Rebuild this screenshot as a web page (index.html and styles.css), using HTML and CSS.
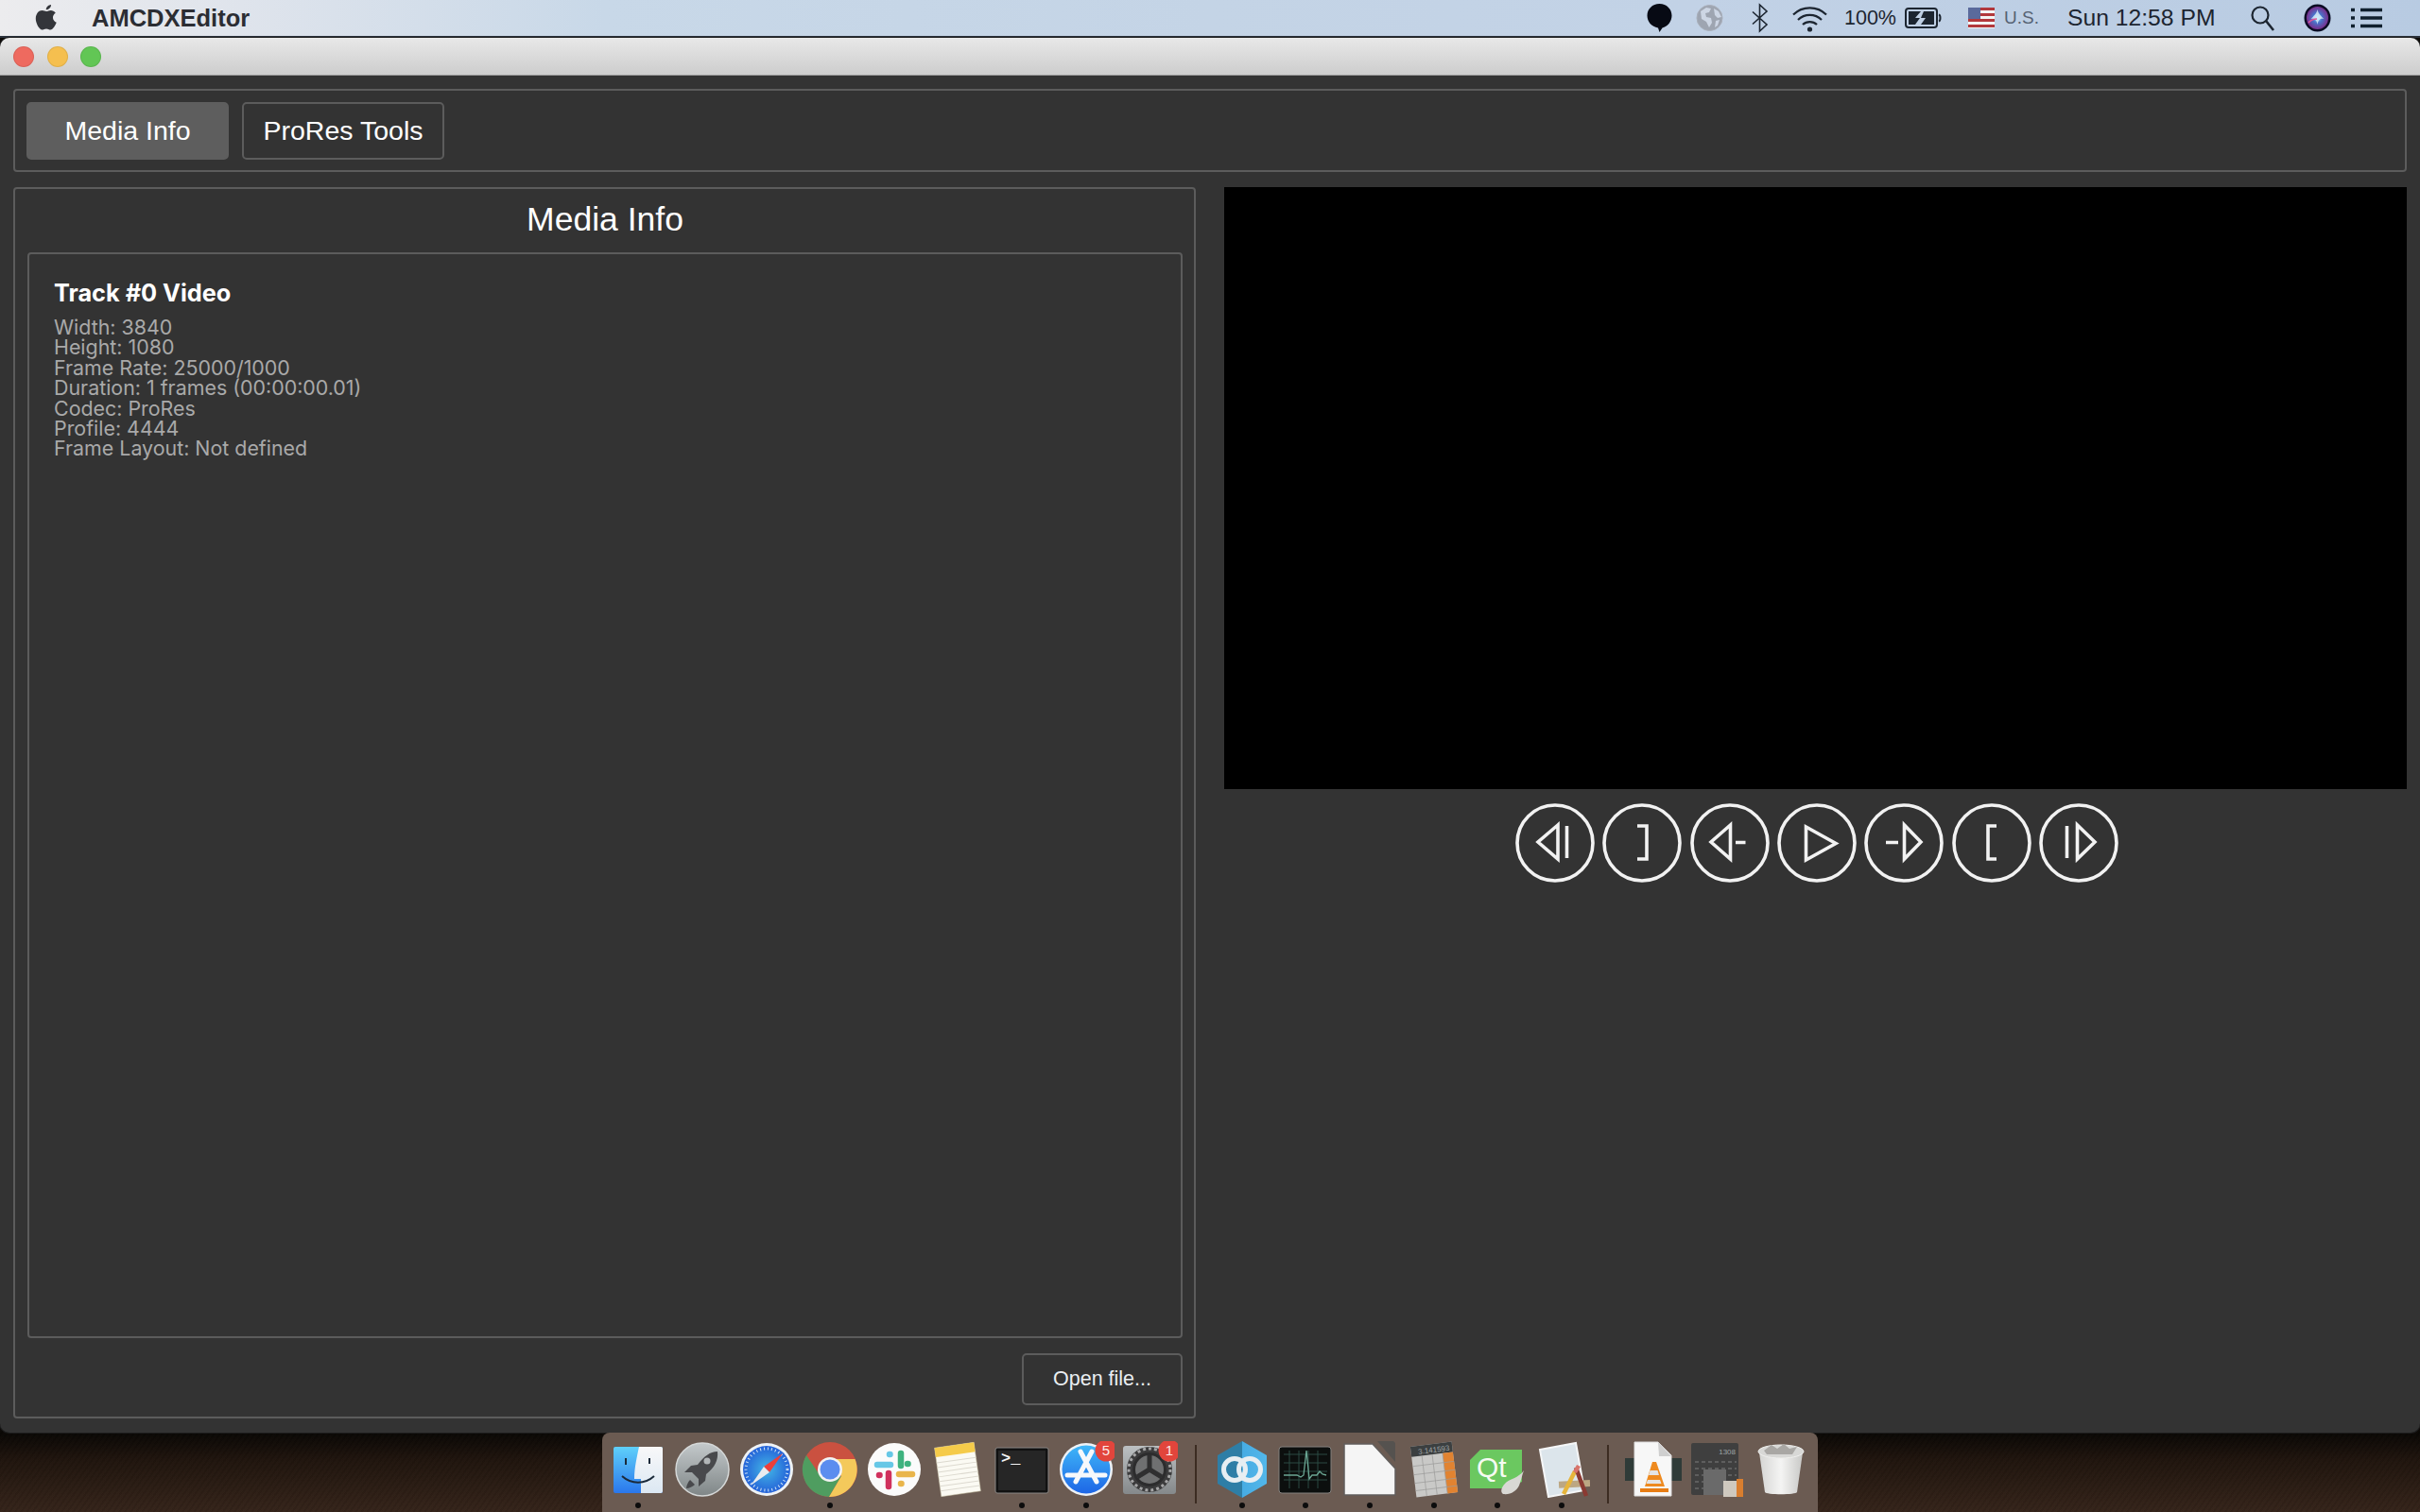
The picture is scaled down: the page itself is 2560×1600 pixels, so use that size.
FILE: index.html
```html
<!DOCTYPE html>
<html lang="en">
<head>
<meta charset="utf-8">
<title>AMCDXEditor</title>
<link rel="stylesheet" href="styles.css">
</head>
<body>
<div class="screen">
  <header class="menubar">
    <div class="menu-left">
      <svg class="apple" viewBox="0 0 24 30"><path d="M17 1c.2 2.600-2.400 5.500-5.200 5.300C11.500 3.700 14.300 1.200 17 1zM12 8c1.400 0 2.700-1.100 4.800-1.100 1.700 0 3.800.9 5 2.800-4.200 2.500-3.500 8.300.9 10-1.100 3-3.700 7.800-6.300 7.800-1.700 0-2.500-1.100-4.400-1.100-2 0-2.900 1.100-4.500 1.100C4.500 27.500.8 20.600.8 15.800.8 10.400 4.100 7 7.600 7c1.900 0 3.200 1 4.400 1z"/></svg>
      <span class="app-name">AMCDXEditor</span>
    </div>
    <div class="menu-right">
      <svg class="slot" viewBox="0 0 53 32"><path d="M26.500 1c7.500 0 13 5.500 13 12.500 0 6.500-4.500 11.500-10 13L26.500 31l-1.500-4.500C18 25 13.500 20 13.500 13.500 13.500 6.500 19 1 26.500 1z" fill="#070a14"/></svg>
      <svg class="slot" viewBox="0 0 53 32"><circle cx="26.500" cy="16" r="13.500" fill="#9ea5b1" stroke="#a9afba"/><path d="M17 9l6-4 5 1-2 4-4 1 1 4 5 1 1 5-3 5-3-6-5-3zM31 6l5 3 3 6-4 1-3-3zM33 19l4-1-2 6-3 2z" fill="#cdd6e4"/></svg>
      <svg class="slot" viewBox="0 0 53 32"><path d="M19 9.500L34 23l-7.500 7V2L34 9 19 22.500" fill="none" stroke="#1c2530" stroke-width="1.600"/></svg>
      <svg class="slot" viewBox="0 0 53 32"><path d="M9 12.500a25 25 0 0 1 35 0M14 18a18 18 0 0 1 25 0M19 23a11 11 0 0 1 15 0" fill="none" stroke="#1c2530" stroke-width="2.200"/><circle cx="26.500" cy="28" r="2.600" fill="#1c2530"/></svg>
      <span class="percent">100%</span>
      <svg class="battery" viewBox="0 0 39 24"><rect x="1" y="2" width="33" height="20" rx="3" fill="none" stroke="#1c2530" stroke-width="2"/><path d="M36 8.500c2 .5 2 6.500 0 7" fill="none" stroke="#1c2530" stroke-width="2"/><path d="M4 5h13l-6 7h5l-5 7H4zM31 5H20l-3 7h5l-5 7h14z" fill="#1c2530"/></svg>
      <svg class="flag" viewBox="0 0 28 22"><rect width="28" height="22" fill="#f4f4f4"/><path d="M0 1.500h28M0 7.500h28M0 13.500h28M0 19.500h28" stroke="#b2383c" stroke-width="3"/><rect width="13" height="12" fill="#5a6a9c"/></svg>
      <span class="locale">U.S.</span>
      <span class="clock">Sun 12:58 PM</span>
      <svg class="search" viewBox="0 0 26 28"><circle cx="11" cy="11" r="8.500" fill="none" stroke="#1c2530" stroke-width="2.200"/><path d="M17 17l8 10" stroke="#1c2530" stroke-width="2.600"/></svg>
      <svg class="siri" viewBox="0 0 29 30">
        <defs><radialGradient id="siriG"><stop offset="0" stop-color="#8fdcf2"/><stop offset=".45" stop-color="#4a70c8"/><stop offset="1" stop-color="#7a2f8e"/></radialGradient></defs>
        <ellipse cx="14.500" cy="15" rx="14" ry="14.500" fill="#0a0c24"/><ellipse cx="14.500" cy="15" rx="11.500" ry="12" fill="url(#siriG)"/><path d="M14.500 6c1 5 4 7 7 10-3-1-6 0-7 6-1-6-4-7-7-6 3-3 6-5 7-10z" fill="#dff0fa" opacity=".8"/><path d="M5 20c3-3 6-4 9-4" stroke="#e0569a" stroke-width="1.500" fill="none"/>
      </svg>
      <svg class="list" viewBox="0 0 33 24"><path d="M10 3.500h23M10 12h23M10 20.500h23" stroke="#10202e" stroke-width="3.600"/><path d="M0 3.500h4M0 12h4M0 20.500h4" stroke="#10202e" stroke-width="3.600"/></svg>
    </div>
  </header>

  <main class="window">
    <div class="titlebar">
      <span class="light light-close"></span>
      <span class="light light-min"></span>
      <span class="light light-max"></span>
    </div>
    <div class="content">
      <nav class="toolbar">
        <button class="tab tab-active">Media Info</button>
        <button class="tab">ProRes Tools</button>
      </nav>
      <div class="columns">
        <section class="info-panel">
          <h1 class="panel-title">Media Info</h1>
          <div class="tracks">
            <h2 class="track-title">Track #0 Video</h2>
            <p class="track-line">Width: 3840</p>
            <p class="track-line">Height: 1080</p>
            <p class="track-line">Frame Rate: 25000/1000</p>
            <p class="track-line">Duration: 1 frames (00:00:00.01)</p>
            <p class="track-line">Codec: ProRes</p>
            <p class="track-line">Profile: 4444</p>
            <p class="track-line">Frame Layout: Not defined</p>
          </div>
          <div class="panel-actions"><button class="open-btn">Open file...</button></div>
        </section>
        <section class="player">
          <div class="video"></div>
          <div class="controls">
            <svg class="ctrl" viewBox="0 0 84 84"><ellipse cx="42" cy="42" rx="40" ry="40"/><path d="M45 23L24 41l21 18zM54.500 24v34"/></svg>
            <svg class="ctrl" viewBox="0 0 84 84"><ellipse cx="42" cy="42" rx="40" ry="40"/><path d="M37 24h10v35H37"/></svg>
            <svg class="ctrl" viewBox="0 0 84 84"><ellipse cx="42" cy="42" rx="40" ry="40"/><path d="M42.500 23L22 41l20.500 18zM48 41.500h10.500"/></svg>
            <svg class="ctrl" viewBox="0 0 84 84"><ellipse cx="42" cy="42" rx="40" ry="40"/><path d="M30.500 25v35L62 42.500z"/></svg>
            <svg class="ctrl" viewBox="0 0 84 84"><ellipse cx="42" cy="42" rx="40" ry="40"/><path d="M42.500 23L60 41 42.500 59zM23 41.500h13"/></svg>
            <svg class="ctrl" viewBox="0 0 84 84"><ellipse cx="42" cy="42" rx="40" ry="40"/><path d="M47 24h-9v35h9"/></svg>
            <svg class="ctrl" viewBox="0 0 84 84"><ellipse cx="42" cy="42" rx="40" ry="40"/><path d="M40.500 23L59 41 40.500 59zM29.500 24v34"/></svg>
          </div>
        </section>
      </div>
    </div>
  </main>

  <footer class="dock">
    <div class="dock-item on">
      <svg viewBox="0 0 60 60"><defs><linearGradient id="fb" x1="0" y1="0" x2="0" y2="1"><stop offset="0" stop-color="#5fd0fa"/><stop offset="1" stop-color="#2a77ec"/></linearGradient><linearGradient id="fw" x1="0" y1="0" x2="0" y2="1"><stop offset="0" stop-color="#f8f8f9"/><stop offset="1" stop-color="#dce8f3"/></linearGradient></defs>
        <rect x="4" y="6" width="52" height="49" rx="2" fill="url(#fb)"/><path d="M31 6h23a2 2 0 0 1 2 2v45a2 2 0 0 1-2 2H33V40h-7c0-12 3-24 5-34z" fill="url(#fw)"/><path d="M17 18v7M42 18v6" stroke="#1b2a3a" stroke-width="2"/><path d="M13 37c10 9 24 9 34 0" fill="none" stroke="#1b2a3a" stroke-width="2"/></svg>
    </div>
    <div class="dock-item off">
      <svg viewBox="0 0 60 60"><defs><linearGradient id="rk" x1="0" y1="0" x2="0" y2="1"><stop offset="0" stop-color="#c4c9cb"/><stop offset="1" stop-color="#7f8687"/></linearGradient></defs>
        <circle cx="30" cy="30" r="28" fill="url(#rk)" stroke="#d5d8d8" stroke-width="1.500"/><path d="M46 11c1 9-3 17-12 24l-1 7-7 6 0-8-7-7-8 0 7-7 7-1C32 16 38 11 46 11z" fill="#48494c"/><path d="M17 41c-2 2-4 6-4 9 3 0 7-2 9-4z" fill="#48494c"/><circle cx="35" cy="21" r="3.500" fill="#b2b6b8"/></svg>
    </div>
    <div class="dock-item off">
      <svg viewBox="0 0 60 60"><defs><radialGradient id="sf"><stop offset="0" stop-color="#43b6e6"/><stop offset="1" stop-color="#2462d8"/></radialGradient></defs>
        <circle cx="30" cy="30" r="28" fill="#eef2f5"/><circle cx="30" cy="30" r="25" fill="url(#sf)"/><circle cx="30" cy="30" r="22" fill="none" stroke="#cfe4f6" stroke-width="3" stroke-dasharray="1 3"/><path d="M47 13L33 33 27 27z" fill="#ec3f3a"/><path d="M13 47l14-20 6 6z" fill="#e9ecef"/></svg>
    </div>
    <div class="dock-item on">
      <svg viewBox="0 0 60 60"><circle cx="30" cy="30" r="29" fill="#ca5140"/><path d="M5 15a29 29 0 0 0 24 44L42 37H20z" fill="#4f9d60"/><path d="M29 59A29 29 0 0 0 56.500 19H31l11 18z" fill="#f4c95b"/><circle cx="30" cy="30" r="13" fill="#f3f3f3"/><circle cx="30" cy="30" r="10.500" fill="#5b8def"/></svg>
    </div>
    <div class="dock-item off">
      <svg viewBox="0 0 60 60"><circle cx="30" cy="30" r="28" fill="#fbfbfb"/><g fill="none" stroke-width="6.500" stroke-linecap="round"><path d="M37 13v13" stroke="#3fb27f"/><path d="M44 24h.5" stroke="#3fb27f"/><path d="M35 35h14" stroke="#e9b54b"/><path d="M37 45h.5" stroke="#e9b54b"/><path d="M24 34v14" stroke="#d0315d"/><path d="M14 36h.5" stroke="#d0315d"/><path d="M12 25h14" stroke="#66c7e6"/><path d="M25 14h.5" stroke="#66c7e6"/></g></svg>
    </div>
    <div class="dock-item off">
      <svg viewBox="0 0 60 60"><g transform="rotate(-8 30 30)"><rect x="9" y="4" width="42" height="52" fill="#fbfaf3" stroke="#c9c4a8" stroke-width=".5"/><rect x="9" y="4" width="42" height="10" fill="#f5cb4a"/><path d="M9 20h42M9 25h42M9 30h42M9 35h42M9 40h42M9 45h42M9 50h42" stroke="#dcd9cf"/></g></svg>
    </div>
    <div class="dock-item on">
      <svg viewBox="0 0 60 60"><rect x="2" y="7" width="56" height="48" rx="2" fill="#111" stroke="#8a8785" stroke-width="1"/><rect x="5" y="10" width="50" height="42" fill="#262626"/><text class="term-text" x="8" y="23">&gt;_</text></svg>
    </div>
    <div class="dock-item on">
      <svg viewBox="0 0 60 60"><defs><linearGradient id="as" x1="0" y1="0" x2="0" y2="1"><stop offset="0" stop-color="#3fb6f8"/><stop offset="1" stop-color="#1d66e6"/></linearGradient></defs>
        <circle cx="30" cy="30" r="28" fill="#eef2f6"/><circle cx="30" cy="30" r="25.500" fill="url(#as)"/><path d="M36 11L19 43M24 11l17 32M10 36h40" stroke="#f6f8fb" stroke-width="5" stroke-linecap="round" fill="none"/><circle cx="51" cy="10" r="11.500" fill="#e2453c"/><text class="badge-text" x="51" y="15">5</text></svg>
    </div>
    <div class="dock-item off">
      <svg viewBox="0 0 60 60"><defs><linearGradient id="sp" x1="0" y1="0" x2="0" y2="1"><stop offset="0" stop-color="#bcc0c2"/><stop offset="1" stop-color="#85898b"/></linearGradient></defs>
        <rect x="2" y="5" width="56" height="51" rx="3" fill="url(#sp)"/><circle cx="30" cy="30" r="24" fill="#3b3b3c"/><circle cx="30" cy="30" r="22" fill="none" stroke="#a5a5a6" stroke-width="3" stroke-dasharray="3 3"/><circle cx="30" cy="30" r="16.500" fill="#6f7071" stroke="#2c2c2d" stroke-width="3"/><path d="M30 30V15M30 30L17 38M30 30l13 8" stroke="#2f2f30" stroke-width="5"/><circle cx="51" cy="10" r="11.500" fill="#e2453c"/><text class="badge-text" x="51" y="15">1</text></svg>
    </div>
    <div class="dock-sep"></div>
    <div class="dock-item on">
      <svg viewBox="0 0 60 60"><defs><linearGradient id="hx" x1="0" y1="0" x2="1" y2="0"><stop offset="0" stop-color="#2e7ea6"/><stop offset=".5" stop-color="#2e7ea6"/><stop offset=".5" stop-color="#47ace3"/><stop offset="1" stop-color="#52b7ea"/></linearGradient></defs>
        <path d="M30 0l26 15v30L30 60 4 45V15z" fill="url(#hx)"/><circle cx="22" cy="30" r="11.500" fill="none" stroke="#e7eef2" stroke-width="5"/><circle cx="38" cy="30" r="11.500" fill="none" stroke="#e7eef2" stroke-width="5"/></svg>
    </div>
    <div class="dock-item on">
      <svg viewBox="0 0 60 60"><rect x="2" y="6" width="55" height="49" rx="3" fill="#0c0f0e" stroke="#85827f"/><path d="M7 14h46M7 23h46M7 32h46M7 41h46M13 10v40M23 10v40M33 10v40M43 10v40" stroke="#2a4a43"/><path d="M7 36h14l4 2 3-2 3-26 3 30 3-4h5l3-4 3 3 4 1" fill="none" stroke="#6ba794" stroke-width="1.300"/></svg>
    </div>
    <div class="dock-item on">
      <svg viewBox="0 0 60 60"><path d="M38 0h17l2 2v20z" fill="#55524f"/><path d="M3 3h30l24 26v28H3z" fill="#f5f5f5" stroke="#615e5c" stroke-width="1.500"/></svg>
    </div>
    <div class="dock-item on">
      <svg viewBox="0 0 60 60"><g transform="rotate(-7 30 30)"><rect x="8" y="3" width="44" height="54" fill="#c9c9c7"/><rect x="8" y="3" width="44" height="11" fill="#3b3f40"/><text class="calc-text" x="49" y="12" text-anchor="end">3.141593</text><rect x="41" y="14" width="11" height="43" fill="#e18331"/><path d="M8 24h44M8 33h44M8 42h44M8 50h44M19 14v43M30 14v43M41 14v43" stroke="#9c9c9a" stroke-width=".7"/></g></svg>
    </div>
    <div class="dock-item on">
      <svg viewBox="0 0 60 60"><path d="M12 9h44v34l-14 7H1V20z" fill="#6bc860"/><text class="qt-text" x="8" y="38">Qt</text><path d="M58 31c-5 8-16 9-20 14-4 4-5 9-2 11 8 1 14-3 17-9 2-5 3-11 5-16z" fill="#d9d8d4"/></svg>
    </div>
    <div class="dock-item on">
      <svg viewBox="0 0 60 60"><path d="M7 9L45 2l9 50-38 7z" fill="#dce5eb" stroke="#f5f6f7" stroke-width="2"/><rect x="27" y="42" width="33" height="7" fill="#bca783" transform="rotate(-3 40 45)"/><path d="M32 56l12-24" stroke="#e6b53c" stroke-width="4.500"/><path d="M56 58l-11-30" stroke="#8b3a32" stroke-width="4.500"/><path d="M44 33l4-7" stroke="#d9746b" stroke-width="4.500"/></svg>
    </div>
    <div class="dock-sep dock-sep-end"></div>
    <div class="dock-item off">
      <svg viewBox="0 0 60 60"><rect x="0" y="18" width="60" height="24" fill="#2f3b38"/><path d="M10 1h25l14 14v43H10z" fill="#f7f7f7" stroke="#ddd"/><path d="M35 1l1 15h13z" fill="#cfcfcf"/><path d="M29 22l4 0 9 26H21z" fill="#ee8a1f"/><path d="M26.500 31h8l1.500 5H25z" fill="#e4e4e4"/><path d="M24 41h13l1.500 4h-16z" fill="#e4e4e4"/><path d="M16 50h30v4H16z" fill="#e77d14"/></svg>
    </div>
    <div class="dock-item off">
      <svg viewBox="0 0 60 60"><rect x="2" y="2" width="50" height="55" rx="2" fill="#3f3f3f"/><text class="calc-text" x="49" y="14" text-anchor="end">1308</text><path d="M6 22h44M6 29h44M6 36h44M6 43h44M6 50h44" stroke="#5e5e5e" stroke-width="2" stroke-dasharray="4 3"/><rect x="15" y="30" width="24" height="27" fill="#6a6a6a"/><rect x="36" y="42" width="20" height="17" fill="#cfc9bf"/><rect x="50" y="40" width="7" height="19" fill="#d97e2f"/></svg>
    </div>
    <div class="dock-item off">
      <svg viewBox="0 0 60 60"><defs><linearGradient id="tr" x1="0" y1="0" x2="1" y2="0"><stop offset="0" stop-color="#d5d5d3"/><stop offset=".5" stop-color="#f4f4f3"/><stop offset="1" stop-color="#c8c8c6"/></linearGradient></defs>
        <path d="M7 12h46l-6 42c-1 3-33 3-34 0z" fill="url(#tr)"/><ellipse cx="30" cy="11" rx="24" ry="7" fill="#d8d8d6" stroke="#efefed"/><path d="M12 10l8-6 6 4 7-5 6 5 8-2-5 8H15z" fill="#a9a7a4"/></svg>
    </div>
  </footer>
</div>
</body>
</html>
```
FILE: styles.css
```css
* { box-sizing: border-box; }
html, body { margin: 0; padding: 0; }
body { width: 2560px; height: 1600px; overflow: hidden; font-family: "Liberation Sans", Arial, sans-serif; }

.screen {
  width: 2560px;
  height: 1600px;
  display: flex;
  flex-direction: column;
  background:
    repeating-linear-gradient(125deg, rgba(0, 0, 0, .05) 0 2px, rgba(255, 255, 255, .006) 2px 5px),
    linear-gradient(180deg, #0b0805 0, #0b0805 1518px, #20150e 1545px, #35241a 1600px);
}

/* menu bar */
.menubar {
  height: 40px;
  flex: none;
  display: flex;
  justify-content: space-between;
  align-items: center;
  background: linear-gradient(90deg, #ececee 0, #dfe4ec 10%, #c8d8e8 25%, #c4d4e6 50%, #c2d2e6 70%, #b8cbe2 100%);
  border-bottom: 2px solid #2c333d;
  color: #1c2530;
}
.menu-left { display: flex; align-items: center; padding-left: 37px; }
.apple { width: 24px; height: 30px; fill: #33353a; }
.app-name { margin-left: 36px; font-size: 25.5px; font-weight: 700; color: #2b2d33; }
.menu-right { display: flex; align-items: center; padding-right: 40px; }
.slot { width: 53px; height: 32px; }
.percent { margin-left: 10px; width: 55px; font-size: 21.5px; white-space: nowrap; }
.battery { width: 39px; height: 24px; margin-left: 9px; }
.flag { width: 28px; height: 22px; margin-left: 28px; }
.locale { margin-left: 10px; width: 37px; font-size: 19px; color: #566273; white-space: nowrap; }
.clock { margin-left: 30px; width: 157px; font-size: 24.700px; white-space: nowrap; }
.search { width: 26px; height: 28px; margin-left: 36px; }
.siri { width: 29px; height: 30px; margin-left: 31px; }
.list { width: 33px; height: 24px; margin-left: 21px; }

/* window */
.window {
  height: 1476px;
  flex: none;
  display: flex;
  flex-direction: column;
  background: #333;
  border-radius: 10px;
  overflow: hidden;
  box-shadow: 0 0 0 1px #1c1c1c;
}
.titlebar {
  height: 40px;
  flex: none;
  display: flex;
  align-items: center;
  gap: 13.500px;
  padding-left: 14px;
  background: linear-gradient(180deg, #e8e8e8, #cdcdcd);
  border-bottom: 1px solid #9e9e9e;
}
.light { width: 22px; height: 22px; border-radius: 50%; border: 1px solid rgba(0, 0, 0, .08); }
.light-close { background: #ee6a5f; }
.light-min { background: #f5bf4f; }
.light-max { background: #62c655; }

.content {
  flex: 1;
  min-height: 0;
  display: flex;
  flex-direction: column;
  gap: 16px;
  padding: 14px 14px 15px 14px;
}
.toolbar {
  height: 88px;
  flex: none;
  display: flex;
  gap: 14px;
  padding: 12px 11px 11px 12px;
  border: 2px solid #5c5c5c;
  border-radius: 4px;
}
.tab {
  width: 214px;
  height: 61px;
  padding: 0;
  font: 28.500px "Liberation Sans", Arial, sans-serif;
  color: #fff;
  background: #333;
  border: 2px solid #5c5c5c;
  border-radius: 5px;
}
.tab-active { background: #5e5e5e; border-color: #5e5e5e; }

.columns { flex: 1; min-height: 0; display: flex; gap: 30px; }
.info-panel {
  width: 1251px;
  flex: none;
  display: flex;
  flex-direction: column;
  padding: 0 12px 12px 13px;
  border: 2px solid #5c5c5c;
  border-radius: 4px;
}
.panel-title {
  height: 67px;
  flex: none;
  margin: 0;
  font-size: 35.500px;
  font-weight: 400;
  line-height: 64px;
  text-align: center;
  color: #fff;
}
.tracks {
  flex: 1;
  min-height: 0;
  padding: 26px 26px;
  font-family: Inter, "Liberation Sans", sans-serif;
  border: 2px solid #5c5c5c;
  border-radius: 4px;
}
.track-title { margin: 0 0 11px; font-size: 25.300px; line-height: 30px; font-weight: 700; color: #fff; }
.track-line { margin: 0; font-size: 21.400px; line-height: 21.400px; color: #a9a9a9; white-space: nowrap; }
.panel-actions { flex: none; display: flex; justify-content: flex-end; padding-top: 16px; }
.open-btn {
  width: 170px;
  height: 55px;
  padding: 0;
  font: 21.500px "Liberation Sans", Arial, sans-serif;
  color: #eaeef2;
  background: #333;
  border: 2px solid #5c5c5c;
  border-radius: 5px;
}

.player { flex: 1; min-width: 0; display: flex; flex-direction: column; }
.video { height: 637px; flex: none; background: #000; }
.controls { display: flex; justify-content: center; gap: 8.400px; padding: 15px 0 0 3px; }
.ctrl { width: 84px; height: 84px; fill: none; stroke: #f2f2f2; stroke-width: 3.600; }

/* dock */
.dock {
  width: 1286px;
  height: 84px;
  flex: none;
  align-self: flex-start;
  margin-left: 637px;
  display: flex;
  padding: 9px 0 0 4.700px;
  background: #6b5b52;
  border-radius: 8px 8px 0 0;
}
.dock-item { width: 67.600px; flex: none; display: flex; flex-direction: column; align-items: center; }
.dock-item svg { width: 60px; height: 60px; display: block; }
.dock-item::after { content: ""; width: 6px; height: 6px; margin-top: 5px; border-radius: 50%; background: #0c0c0c; }
.dock-item.off::after { background: transparent; }
.dock-sep { width: 30px; flex: none; }
.dock-sep::before { content: ""; display: block; width: 2px; height: 62px; margin: 4px 0 0 14px; background: #3c2c22; }
.dock-sep-end { width: 30px; margin-right: -0.300px; }
.term-text { font: 700 17px "Liberation Mono", monospace; fill: #f4f4f4; }
.badge-text { font: 15px "Liberation Sans", Arial, sans-serif; fill: #fbe9e7; text-anchor: middle; }
.calc-text { font: 8px "Liberation Sans", Arial, sans-serif; fill: #9fa5a6; }
.qt-text { font: 30px "Liberation Sans", Arial, sans-serif; fill: #f5fbf2; }
```
